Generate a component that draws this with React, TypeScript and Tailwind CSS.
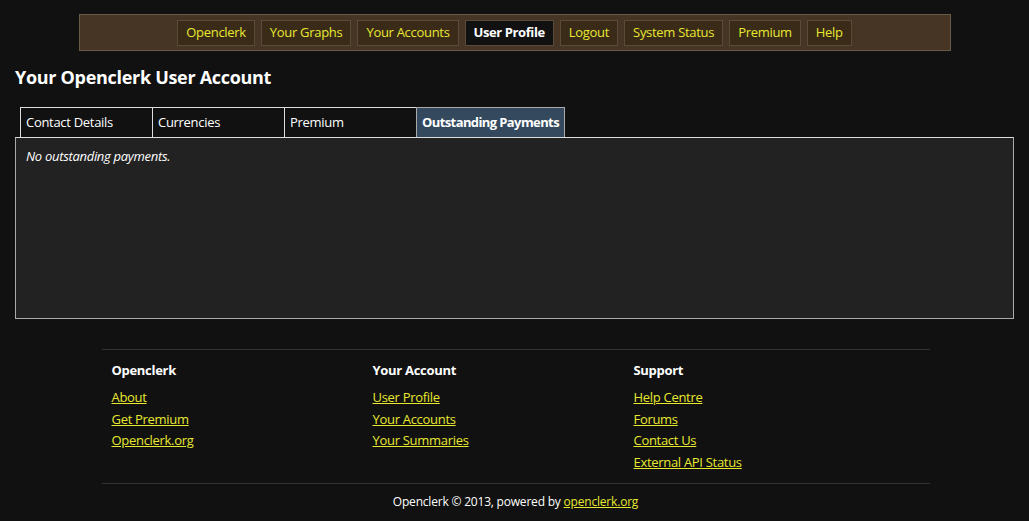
import React from "react";

const navItems = [
  "Openclerk",
  "Your Graphs",
  "Your Accounts",
  "User Profile",
  "Logout",
  "System Status",
  "Premium",
  "Help",
];

const tabs = ["Contact Details", "Currencies", "Premium", "Outstanding Payments"];

const footerCols = [
  { title: "Openclerk", links: ["About", "Get Premium", "Openclerk.org"] },
  { title: "Your Account", links: ["User Profile", "Your Accounts", "Your Summaries"] },
  { title: "Support", links: ["Help Centre", "Forums", "Contact Us", "External API Status"] },
];

export default function App() {
  return (
    <div className="min-h-[521px] bg-[#111111] text-white font-['Open_Sans',sans-serif] text-[13px] pt-[14px]">
      {/* ── Top nav ── */}
      <nav className="mx-auto w-[872px] h-[37px] flex items-center justify-center gap-[6px]
        bg-[#463424] border border-[#6a5a48]">
        {navItems.map((item) => {
          const active = item === "User Profile";
          return (
            <a
              key={item}
              className={
                active
                  ? "h-[26px] px-[8px] flex items-center bg-[#111111] border border-[#5a4a38] text-white font-bold tracking-[-0.4px]"
                  : "h-[26px] px-[8px] flex items-center bg-[#3a2a18] border border-[#5a4a38] text-[#e8e830] tracking-[-0.3px]"
              }
            >
              {item}
            </a>
          );
        })}
      </nav>

      {/* ── Title ── */}
      <h1 className="mt-[14px] ml-[15px] text-[18px] font-bold leading-6 tracking-[-0.3px]">
        Your Openclerk User Account
      </h1>

      {/* ── Tabs ── */}
      <div className="mt-[18px] mx-[15px]">
        <div className="flex pl-[5px]">
          {tabs.map((t) => {
            const active = t === "Outstanding Payments";
            return (
              <div
                key={t}
                className={
                  active
                    ? "h-[30px] px-[5px] flex items-center bg-[#34495e] border border-[#aaaaaa] border-b-0 font-bold tracking-[-0.6px] -ml-px"
                    : "h-[30px] w-[133px] px-[5px] flex items-center bg-[#111111] border border-[#dddddd] border-b-0 tracking-[-0.3px] -ml-px first:ml-0"
                }
              >
                {t}
              </div>
            );
          })}
        </div>
        <div className="h-[182px] bg-[#222222] border border-[#aaaaaa] border-t-[#dddddd] px-[10px] pt-[9px]">
          <p className="italic tracking-[-0.3px]">No outstanding payments.</p>
        </div>
      </div>

      {/* ── Footer ── */}
      <footer className="mx-auto w-[828px] mt-[30px] translate-x-[1px]">
        <div className="border-t border-[#333333] grid grid-cols-[261px_261px_1fr] pl-[10px] pt-[11px] pb-[9px]">
          {footerCols.map((col) => (
            <div key={col.title} className="flex flex-col">
              <h3 className="font-bold leading-[18px] tracking-[-0.3px] mb-[8px]">{col.title}</h3>
              {col.links.map((l) => (
                <a key={l} className="text-[#e8e830] underline leading-[21.7px] tracking-[-0.3px] self-start">
                  {l}
                </a>
              ))}
            </div>
          ))}
        </div>
        <div className="border-t border-[#333333] text-center text-[12px] pt-[9px] tracking-[-0.2px]">
          Openclerk © 2013, powered by <a className="text-[#e8e830] underline">openclerk.org</a>
        </div>
      </footer>
    </div>
  );
}
